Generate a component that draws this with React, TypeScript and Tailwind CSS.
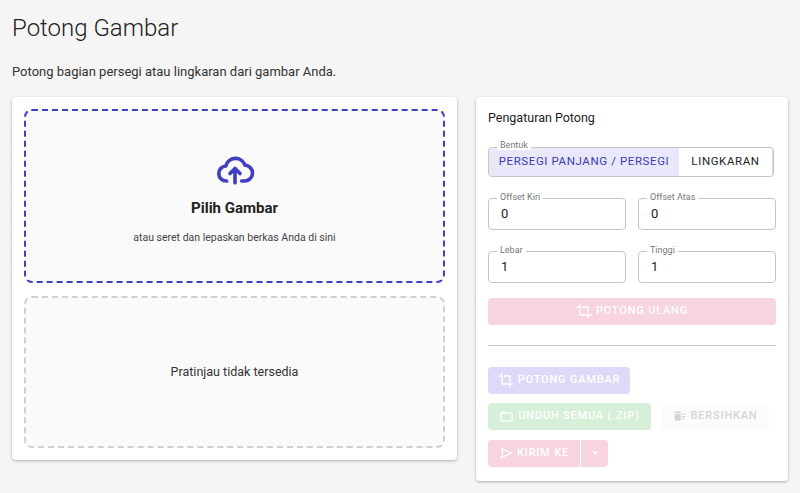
import React from "react";

const Crop = ({ c = "white" }: { c?: string }) => (
  <svg width="16" height="16" viewBox="0 0 24 24" fill={c}><path d="M17 15h2V7c0-1.1-.9-2-2-2H9v2h8zM7 17V1H5v4H1v2h4v10c0 1.1.9 2 2 2h10v4h2v-4h4v-2z" /></svg>
);

const Field = ({ label, value }: { label: string; value: string }) => (
  <div className="relative h-[32px] rounded border border-[#c4c4c4] bg-white flex items-center px-3 text-[13px] text-[#222]">
    <span className="absolute -top-[8px] left-[8px] bg-white px-[3px] text-[9px] text-[#777]">{label}</span>
    {value}
  </div>
);

export default function App() {
  return (
    <div className="w-[800px] h-[493px] bg-[#f5f5f5] overflow-hidden px-3 pt-[12px]" style={{ fontFamily: "Roboto, sans-serif" }}>
      <h1 className="text-[24px] font-light text-[#222] leading-[32px]">Potong Gambar</h1>
      <p className="text-[13px] text-[#333] mt-[20px] leading-[16px]">Potong bagian persegi atau lingkaran dari gambar Anda.</p>
      <div className="flex gap-[19px] mt-[17px] items-start">
        <div className="w-[445px] h-[363px] bg-white rounded shadow-[0_1px_3px_rgba(0,0,0,0.3)] p-3 flex flex-col gap-[13px]">
          <div className="h-[174px] rounded-lg border-2 border-dashed border-[#3f3fc0] bg-[#fafafa] flex flex-col items-center pt-[40px]">
            <svg width="40" height="40" viewBox="0 0 24 24" fill="none" stroke="#3f3fc0" strokeWidth="2.2" strokeLinecap="round" strokeLinejoin="round">
              <path d="M7 18a4.5 4.5 0 0 1-.5-9A6 6 0 0 1 18 8.5a4.5 4.5 0 0 1-.5 9.5H16" />
              <path d="M12 19v-8M9 13.5l3-3 3 3" />
            </svg>
            <div className="mt-[6px] text-[15px] font-bold text-[#222]">Pilih Gambar</div>
            <div className="mt-[10px] text-[10.5px] text-[#444]">atau seret dan lepaskan berkas Anda di sini</div>
          </div>
          <div className="flex-1 rounded-lg border-2 border-dashed border-[#d0d0d0] bg-[#fafafa] flex items-center justify-center text-[12.5px] text-[#333]">
            Pratinjau tidak tersedia
          </div>
        </div>
        <div className="w-[312px] h-[384px] bg-white rounded shadow-[0_1px_3px_rgba(0,0,0,0.3)] px-3 pt-[12px]">
          <div className="text-[12.5px] text-[#222]">Pengaturan Potong</div>
          <div className="relative mt-[19px] flex h-[30px] w-[286px] rounded border border-[#c4c4c4]">
            <span className="absolute -top-[7px] left-[8px] bg-white px-[3px] text-[9px] text-[#777] leading-none">Bentuk</span>
            <div className="w-[190px] bg-[#e8e8fa] text-[#3b3bb0] text-[11.5px] tracking-[0.6px] flex items-center justify-center rounded-l">PERSEGI PANJANG / PERSEGI</div>
            <div className="w-[94px] text-[#222] text-[11.5px] tracking-[0.6px] flex items-center justify-center border-r border-[#ddd]">LINGKARAN</div>
          </div>
          <div className="grid grid-cols-2 gap-x-[12px] gap-y-[21px] mt-[21px]">
            <Field label="Offset Kiri" value="0" />
            <Field label="Offset Atas" value="0" />
            <Field label="Lebar" value="1" />
            <Field label="Tinggi" value="1" />
          </div>
          <div className="mt-[15px] h-[27px] rounded bg-[#f8d3e0] flex items-center justify-center gap-1 text-white text-[11px] font-medium tracking-[0.8px]"><Crop />POTONG ULANG</div>
          <div className="mt-[20px] border-t border-[#ccc]" />
          <div className="mt-[21px] w-[142px] h-[27px] rounded bg-[#dcdaf8] flex items-center justify-center gap-1 text-white text-[11px] font-medium tracking-[0.8px]"><Crop />POTONG GAMBAR</div>
          <div className="mt-[9px] flex gap-[10px]">
            <div className="w-[163px] h-[27px] rounded bg-[#d6efd8] flex items-center justify-center gap-1 text-white text-[11px] font-medium tracking-[0.8px]">
              <svg width="15" height="15" viewBox="0 0 24 24" fill="white"><path d="M20 6h-8l-2-2H4c-1.1 0-2 .9-2 2v12c0 1.1.9 2 2 2h16c1.1 0 2-.9 2-2V8c0-1.1-.9-2-2-2zm0 12H4V8h16z" /></svg>UNDUH SEMUA (.ZIP)</div>
            <div className="w-[108px] h-[27px] rounded bg-[#fcfcfc] flex items-center justify-center gap-1 text-[#d4d4d4] text-[11px] font-medium tracking-[0.8px]">
              <svg width="14" height="14" viewBox="0 0 24 24" fill="#d4d4d4"><path d="M15 16h4v2h-4zm0-8h7v2h-7zm0 4h6v2h-6zM3 18c0 1.1.9 2 2 2h6c1.1 0 2-.9 2-2V8H3zM14 5h-3l-1-1H6L5 5H2v2h12z" /></svg>BERSIHKAN</div>
          </div>
          <div className="mt-[10px] flex">
            <div className="w-[93px] h-[27px] rounded-l bg-[#f8d3e0] flex items-center justify-center gap-1 text-white text-[11px] font-medium tracking-[0.8px] border-r border-white">
              <svg width="14" height="14" viewBox="0 0 24 24" fill="none" stroke="white" strokeWidth="2.2"><path d="M4 4l17 8-17 8 3-8z" /></svg>KIRIM KE</div>
            <div className="w-[27px] h-[27px] rounded-r bg-[#f8d3e0] flex items-center justify-center">
              <svg width="10" height="10" viewBox="0 0 10 10" fill="white"><path d="M2 3.5h6L5 6.5z" /></svg>
            </div>
          </div>
        </div>
      </div>
    </div>
  );
}
